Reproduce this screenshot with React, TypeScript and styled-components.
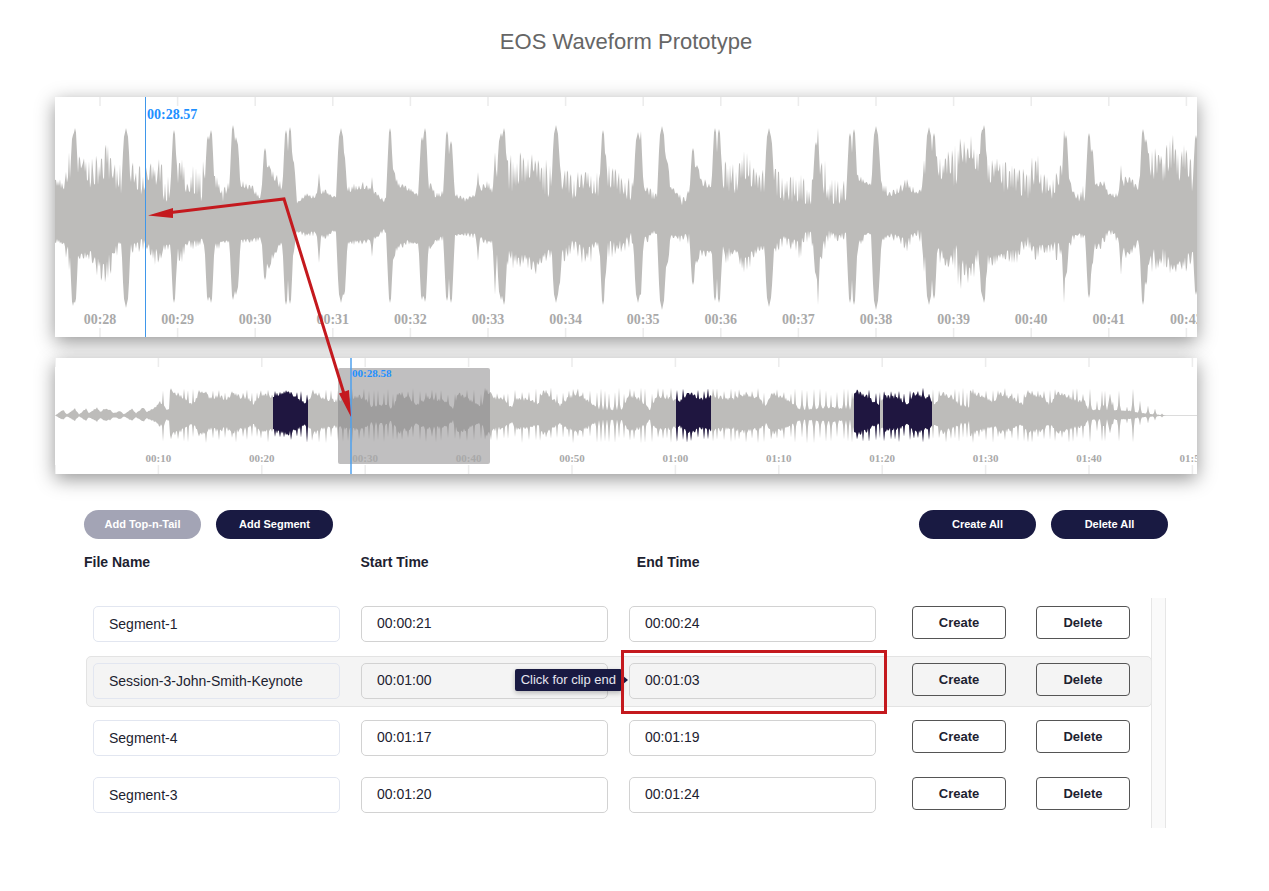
import React from "react";
import styled, { createGlobalStyle } from "styled-components";

const GlobalStyle = createGlobalStyle`
  *, *::before, *::after { box-sizing: border-box; }
  body {
    margin: 0;
    background: #fff;
    color: #1d2230;
    font-family: "Liberation Sans", Arial, sans-serif;
  }
`;

const NAVY = "#191a42";
const RED = "#c4191e";
const WAVE = "#bdbcba";
const BLUE = "#1e90ff";

const Page = styled.main`
  padding: 29px 72px 40px 55px;
`;

const Title = styled.h1`
  margin: 0 0 42px;
  font-size: 22px;
  line-height: 26px;
  font-weight: 400;
  text-align: center;
  color: #666;
`;

const Waveforms = styled.section`
  position: relative;
  display: flex;
  flex-direction: column;
  gap: 21px;
`;

const WavePanel = styled.div`
  background: #fff;
  box-shadow: 0 5px 18px rgba(0, 0, 0, 0.42);

  svg {
    display: block;
    width: 100%;
    height: auto;
  }
`;

const AxisLabel = styled.text<{ $size: number }>`
  font: bold ${(p) => p.$size}px "Liberation Serif", "Times New Roman", serif;
  fill: #a9a9a9;
  text-anchor: middle;
`;

const PlayheadLabel = styled.text<{ $size: number }>`
  font: bold ${(p) => p.$size}px "Liberation Serif", "Times New Roman", serif;
  fill: ${BLUE};
`;

const Annotation = styled.svg`
  position: absolute;
  inset: 0;
  width: 100%;
  height: 100%;
  pointer-events: none;
`;

const Editor = styled.section`
  margin: 36px 29px 0;
`;

const Toolbar = styled.div`
  display: flex;
  gap: 15px;
  margin-bottom: 13px;
`;

const Spacer = styled.div`
  flex: 1;
`;

const Pill = styled.button`
  width: 117px;
  height: 29px;
  padding: 0 0 1px;
  border: 0;
  border-radius: 15px;
  background: ${NAVY};
  color: #fff;
  font: bold 11px "Liberation Sans", Arial, sans-serif;

  &:disabled {
    background: #a3a4b5;
  }
`;

const Table = styled.table`
  display: block;
`;

const Head = styled.thead`
  display: block;
  margin-bottom: 26px;
`;

const HeadRow = styled.tr`
  display: grid;
  grid-template-columns: repeat(3, 51fr) 47fr;
`;

const HeadCell = styled.th`
  padding: 0;
  font-size: 14px;
  line-height: 20px;
  text-align: left;
`;

const Body = styled.tbody`
  position: relative;
  display: flex;
  flex-direction: column;
  gap: 6px;
  height: 230px;
  margin: 0 2px;
  padding: 1px 14px 0 0;

  &::after {
    content: "";
    position: absolute;
    top: 0;
    right: 0;
    bottom: 0;
    width: 15px;
    background: #fafafa;
    border: solid #e6e6e6;
    border-width: 0 1px;
  }
`;

const Row = styled.tr<{ $active: boolean }>`
  display: grid;
  grid-template-columns: repeat(3, minmax(0, 1fr)) 109px 103px;
  column-gap: 21px;
  height: 51px;
  padding: 6px 21px 6px 6px;
  border: 1px solid ${(p) => (p.$active ? "#e3e3e3" : "transparent")};
  border-radius: 5px;
  background: ${(p) => (p.$active ? "#f4f4f4" : "transparent")};
`;

const Cell = styled.td`
  position: relative;
  padding: 0;
`;

const ActionCell = styled.td`
  display: flex;
  justify-content: flex-end;
  align-items: flex-start;
  padding: 0;
`;

const Field = styled.input<{ $kind: "name" | "time" }>`
  display: block;
  width: 100%;
  height: 36px;
  padding: ${(p) => (p.$kind === "name" ? "0 15px" : "0 15px 2px")};
  border: 1px solid ${(p) => (p.$kind === "name" ? "#e2e6f0" : "#d2d2d2")};
  border-radius: 5px;
  background: transparent;
  color: #1d2230;
  font: 14px "Liberation Sans", Arial, sans-serif;
  outline: none;
`;

const RowButton = styled.button`
  width: 94px;
  height: 33px;
  padding: 0 0 1px;
  border: 1px solid #555;
  border-radius: 4px;
  background: transparent;
  color: #1d2230;
  font: bold 13px "Liberation Sans", Arial, sans-serif;
`;

const Tooltip = styled.div`
  position: absolute;
  top: 6px;
  right: calc(100% + 7px);
  padding: 0 6px;
  border-radius: 2px;
  background: ${NAVY};
  color: #e6e6f0;
  font-size: 13px;
  line-height: 22px;
  white-space: nowrap;
  box-shadow: 0 2px 5px rgba(0, 0, 0, 0.25);

  &::after {
    content: "";
    position: absolute;
    top: 6px;
    left: 100%;
    border: solid transparent;
    border-width: 5px 0 5px 6px;
    border-left-color: ${NAVY};
  }
`;

const Highlight = styled.div`
  position: absolute;
  inset: -13px -11px -14px -8px;
  border: 3px solid ${RED};
  pointer-events: none;
`;

/* x, body up, crest up, body down, crest down */
type Envelope = [number, number, number, number, number];
/* x, up, down, half width */
type Beat = [number, number, number, number];

const zoomEnvelope: Envelope[] = [
  [0, 28, 38, 22, 28], [10, 25, 35, 28, 36], [13, 28, 68, 30, 60], [27, 45, 58, 38, 45],
  [35, 22, 55, 35, 52], [40, 22, 58, 42, 60], [52, 40, 72, 42, 72], [60, 22, 55, 28, 48],
  [65, 18, 55, 25, 35], [80, 28, 53, 28, 42], [87, 17, 48, 23, 37], [94, 32, 50, 28, 42],
  [105, 28, 60, 35, 58], [110, 8, 40, 28, 38], [127, 35, 58, 32, 52], [133, 15, 36, 25, 32],
  [138, 18, 55, 25, 38], [148, 12, 55, 22, 32], [162, 28, 38, 28, 38], [168, 12, 30, 25, 28],
  [174, 25, 38, 25, 30], [185, 28, 36, 25, 30], [198, 22, 30, 22, 28], [205, 15, 20, 22, 28],
  [218, 35, 48, 38, 52], [228, 22, 28, 22, 28], [242, 10, 13, 15, 18], [252, 19, 23, 18, 23],
  [258, 16, 20, 15, 22], [270, 22, 26, 20, 26], [275, 18, 21, 17, 20], [283, 16, 18, 12, 15],
  [293, 22, 30, 25, 33], [308, 25, 33, 25, 30], [323, 18, 22, 20, 23], [329, 12, 15, 12, 20],
  [342, 27, 36, 30, 38], [352, 24, 29, 25, 30], [364, 18, 21, 28, 30], [377, 26, 34, 30, 36],
  [380, 17, 22, 25, 28], [388, 17, 28, 20, 26], [400, 19, 22, 20, 22], [410, 12, 17, 17, 22],
  [418, 17, 22, 17, 24], [432, 27, 35, 25, 30], [437, 22, 28, 25, 28], [455, 15, 60, 30, 55],
  [463, 25, 64, 42, 58], [470, 22, 56, 38, 46], [478, 40, 64, 45, 68], [485, 25, 56, 42, 52],
  [493, 15, 55, 32, 45], [507, 22, 48, 32, 52], [517, 15, 42, 25, 38], [532, 28, 48, 30, 55],
  [543, 12, 45, 25, 35], [555, 25, 50, 25, 44], [568, 18, 42, 25, 40], [578, 8, 38, 15, 30],
  [589, 25, 29, 22, 35], [598, 10, 25, 15, 20], [618, 25, 28, 20, 23], [628, 8, 18, 18, 30],
  [634, 20, 26, 18, 30], [648, 28, 38, 35, 43], [655, 26, 32, 35, 42], [668, 18, 58, 30, 55],
  [682, 22, 49, 35, 40], [690, 35, 72, 42, 68], [700, 20, 46, 32, 40], [710, 15, 44, 28, 35],
  [722, 15, 46, 25, 38], [730, 12, 39, 20, 30], [745, 12, 49, 25, 45], [753, 7, 32, 12, 25],
  [768, 22, 68, 25, 52], [773, 12, 36, 15, 28], [785, 8, 34, 18, 28], [792, 8, 34, 16, 28],
  [802, 33, 43, 28, 42], [812, 30, 33, 17, 19], [818, 29, 31, 19, 21], [828, 20, 36, 22, 32],
  [835, 18, 23, 18, 23], [852, 25, 37, 22, 37], [862, 20, 23, 13, 23], [867, 22, 32, 16, 30],
  [872, 12, 50, 20, 36], [881, 45, 68, 22, 54], [887, 25, 62, 35, 54], [893, 40, 70, 45, 54],
  [899, 18, 70, 25, 62], [905, 50, 76, 40, 75], [912, 50, 72, 48, 70], [917, 50, 86, 48, 65],
  [923, 35, 60, 30, 58], [935, 25, 58, 38, 62], [943, 42, 58, 40, 47], [950, 18, 56, 35, 45],
  [962, 22, 55, 32, 52], [972, 10, 46, 18, 35], [980, 30, 65, 32, 45], [988, 18, 48, 28, 42],
  [998, 15, 38, 25, 46], [1004, 25, 54, 28, 46], [1015, 28, 34, 22, 35], [1022, 14, 20, 17, 24],
  [1028, 12, 30, 17, 26], [1042, 28, 32, 30, 35], [1048, 28, 36, 20, 36], [1055, 17, 23, 12, 20],
  [1062, 17, 22, 20, 28], [1072, 32, 43, 36, 46], [1083, 24, 30, 24, 30], [1093, 42, 64, 48, 52],
  [1098, 30, 74, 32, 66], [1105, 46, 60, 42, 54], [1108, 32, 62, 30, 54], [1118, 45, 84, 48, 64],
  [1123, 32, 62, 46, 54], [1130, 38, 70, 42, 58], [1137, 22, 52, 32, 56], [1142, 30, 50, 30, 50],
];

const zoomBeats: Beat[] = [
  [18, 80, 91, 2], [20, 87, 88, 2], [71, 87, 93, 3], [119, 85, 88, 2], [153, 79, 86, 2],
  [156, 85, 88, 2], [178, 90, 85, 2], [181, 78, 80, 3], [210, 67, 65, 2], [214, 50, 54, 3],
  [231, 85, 90, 2], [235, 88, 89, 2], [237, 58, 40, 3], [264, 42, 48, 1], [286, 87, 88, 3],
  [289, 60, 80, 2], [317, 38, 42, 1], [335, 87, 88, 2], [338, 46, 45, 3], [367, 78, 85, 2],
  [370, 87, 87, 2], [392, 84, 86, 2], [396, 74, 88, 2], [423, 43, 46, 1], [440, 63, 80, 1],
  [446, 82, 85, 3], [449, 87, 90, 2], [501, 90, 88, 3], [503, 55, 75, 3], [548, 85, 90, 2],
  [550, 62, 60, 2], [583, 83, 88, 3], [586, 84, 80, 1], [607, 89, 95, 3], [610, 60, 55, 4],
  [638, 67, 70, 2], [642, 50, 48, 3], [660, 87, 86, 2], [664, 86, 88, 2], [665, 64, 60, 2],
  [714, 87, 92, 3], [716, 75, 74, 2], [761, 73, 60, 2], [763, 87, 90, 1], [795, 82, 88, 2],
  [799, 86, 90, 2], [821, 89, 95, 3], [823, 70, 75, 2], [869, 55, 57, 1], [874, 88, 90, 3],
  [879, 82, 84, 2], [927, 85, 80, 2], [929, 90, 88, 2], [1009, 85, 88, 1], [1011, 80, 60, 2],
  [1034, 82, 83, 2], [1037, 66, 50, 2], [1066, 50, 60, 1], [1088, 86, 90, 2], [1091, 76, 70, 2],
  [1141, 80, 80, 2],
];

const bodyLevels: [number, number][] = [
  [0, 0], [8, 5], [12, 1], [20, 6], [24, 1], [31, 6], [34, 2], [42, 7], [45, 3], [50, 6], [55, 5],
  [59, 2], [65, 4], [69, 1], [77, 6], [81, 2], [88, 7], [92, 3], [100, 7], [105, 12], [109, 8],
  [112, 5], [114, 6], [115, 24], [118, 22], [128, 16], [138, 9], [145, 23], [155, 16], [167, 17],
  [170, 13], [178, 21], [185, 16], [193, 15], [198, 10], [205, 19], [217, 17], [232, 22],
  [252, 10], [258, 22], [268, 15], [282, 13], [294, 16], [305, 17], [313, 12], [318, 6],
  [328, 10], [338, 6], [343, 20], [355, 15], [362, 9], [372, 16], [390, 13], [398, 6], [403, 20],
  [418, 12], [427, 8], [430, 24], [441, 15], [450, 15], [453, 8], [457, 8], [460, 15], [475, 14],
  [483, 10], [488, 22], [497, 15], [505, 9], [512, 15], [522, 20], [535, 12], [545, 5], [568, 5],
  [573, 18], [585, 14], [595, 5], [602, 18], [620, 14], [624, 12], [635, 20], [648, 14],
  [657, 18], [678, 14], [688, 19], [705, 15], [710, 8], [717, 20], [735, 13], [745, 5],
  [778, 7], [795, 5], [800, 22], [812, 17], [823, 9], [830, 17], [845, 15], [853, 10],
  [858, 20], [875, 15], [880, 10], [887, 20], [898, 15], [907, 8], [914, 7], [915, 22],
  [935, 14], [938, 11], [945, 20], [958, 15], [968, 10], [972, 20], [988, 17], [995, 9],
  [1002, 21], [1022, 13], [1030, 12], [1033, 5], [1055, 5], [1075, 4], [1088, 2], [1100, 1],
  [1112, 0], [1142, 0],
];

const tailBeats: Beat[] = [
  [108, 25, 26, 0], [1035, 27, 27, 0], [1042, 15, 16, 0], [1047, 25, 26, 0], [1050, 25, 26, 0],
  [1055, 22, 18, 1], [1058, 14, 9, 0], [1064, 25, 26, 0], [1072, 9, 8, 0], [1078, 27, 27, 0],
  [1085, 15, 10, 0], [1093, 10, 8, 0], [1100, 7, 5, 0], [1107, 2, 2, 0],
];

function seeded(seed: number) {
  let s = seed;
  return () => {
    s = (s * 1103515245 + 12345) % 2147483648;
    return s / 2147483648;
  };
}

function overviewBeats(): Beat[] {
  const rand = seeded(11);
  const beats: Beat[] = [...tailBeats];
  for (let x = 116; x < 1032; x += 4 + Math.floor(rand() * 4)) {
    beats.push([x, 21 + rand() * 7, 21 + rand() * 7, 0]);
  }
  return beats;
}

function mix(env: Envelope[], x: number, k: number) {
  let i = 1;
  while (i < env.length - 1 && env[i][0] < x) i += 1;
  const a = env[i - 1];
  const b = env[i];
  const t = Math.min(1, Math.max(0, (x - a[0]) / (b[0] - a[0])));
  return a[k] + (b[k] - a[k]) * t;
}

function beatGain(distance: number, halfWidth: number) {
  if (halfWidth === 0) return Math.max(0, 1 - distance * 0.6);
  if (distance < halfWidth) return 1 - distance * 0.05;
  return Math.max(0, 0.72 - (distance - halfWidth) * 0.26);
}

function wavePath(env: Envelope[], beats: Beat[], mid: number, seed: number) {
  const rand = seeded(seed);
  const top: string[] = [];
  const bottom: string[] = [];
  const last = env[env.length - 1][0];
  let crest = false;
  let nextFlip = 0;
  for (let x = 0; x <= last; x += 1) {
    let up = mix(env, x, 1);
    let down = mix(env, x, 3);
    if (x >= nextFlip) {
      crest = !crest;
      nextFlip = x + 1 + Math.floor(rand() * 2);
    }
    const reach = crest ? 0.6 + rand() * 0.45 : rand() * 0.35;
    up += (mix(env, x, 2) - up) * reach;
    down += (mix(env, x, 4) - down) * (crest ? 0.4 + rand() * 0.6 : rand() * 0.3);
    beats.forEach(([bx, bu, bd, w]) => {
      const gain = beatGain(Math.abs(x - bx), w);
      up = Math.max(up, bu * gain);
      down = Math.max(down, bd * gain);
    });
    top.push(`${x} ${(mid - up).toFixed(1)}`);
    bottom.unshift(`${x} ${(mid + down).toFixed(1)}`);
  }
  return `M${top.join("L")}L${bottom.join("L")}Z`;
}

const zoomPath = wavePath(zoomEnvelope, zoomBeats, 118, 5);
const overviewPath = wavePath(
  bodyLevels.map(([x, v]) => [x, v, v + Math.min(4, v / 4), v * 0.75, v * 0.75 + Math.min(5, v / 4)]),
  overviewBeats(),
  57.5,
  7,
);

const pad = (n: number) => String(n).padStart(2, "0");
const zoomTicks = Array.from({ length: 15 }, (_, i) => ({ x: 45 + i * 77.6, label: `00:${28 + i}` }));
const overviewTicks = Array.from({ length: 12 }, (_, i) => ({
  x: i * 103.4,
  label: i ? `${pad(Math.floor(i / 6))}:${pad((i % 6) * 10)}` : "",
}));
const clips = [
  { x: 218, width: 35 },
  { x: 621, width: 35 },
  { x: 799, width: 26 },
  { x: 828, width: 49 },
];

function ZoomView() {
  return (
    <WavePanel>
      <svg viewBox="0 0 1142 240" role="img" aria-label="Zoomed waveform">
        {zoomTicks.map((t) => (
          <path key={t.label} d={`M${t.x} 0v9M${t.x} 231v9`} stroke="#ececec" strokeWidth={1.5} />
        ))}
        <path d={zoomPath} fill={WAVE} />
        {zoomTicks.map((t) => (
          <AxisLabel key={t.label} $size={14} x={t.x} y={227}>{t.label}</AxisLabel>
        ))}
        <rect x={90} y={0} width={1} height={240} fill="#3f97ea" />
        <PlayheadLabel $size={14} x={92} y={22}>00:28.57</PlayheadLabel>
      </svg>
    </WavePanel>
  );
}

function Overview() {
  return (
    <WavePanel>
      <svg viewBox="0 0 1142 116" role="img" aria-label="Waveform overview">
        <defs>
          <clipPath id="clips">
            {clips.map((c) => (
              <rect key={c.x} x={c.x} y={0} width={c.width} height={116} />
            ))}
          </clipPath>
        </defs>
        {overviewTicks.map((t) => (
          <path key={t.x} d={`M${t.x} 0v9M${t.x} 107v9`} stroke="#ececec" strokeWidth={1.5} />
        ))}
        <path d="M1100 57.5H1142" stroke="#dcdcdc" />
        <path d={overviewPath} fill={WAVE} />
        <path d={overviewPath} fill="#1f1640" clipPath="url(#clips)" />
        <rect x={283} y={10} width={152} height={96} rx={2} fill="#827f81" fillOpacity={0.5} />
        {overviewTicks.map((t) => (
          <AxisLabel key={t.x} $size={11} x={t.x} y={104}>{t.label}</AxisLabel>
        ))}
        <path d="M296 0v116" stroke="#4ea0ee" strokeWidth={1.5} />
        <PlayheadLabel $size={11} x={297} y={19}>00:28.58</PlayheadLabel>
      </svg>
    </WavePanel>
  );
}

const segments = [
  { name: "Segment-1", start: "00:00:21", end: "00:00:24" },
  { name: "Session-3-John-Smith-Keynote", start: "00:01:00", end: "00:01:03", active: true },
  { name: "Segment-4", start: "00:01:17", end: "00:01:19" },
  { name: "Segment-3", start: "00:01:20", end: "00:01:24" },
];

export default function App() {
  return (
    <Page>
      <GlobalStyle />
      <Title>EOS Waveform Prototype</Title>
      <Waveforms>
        <ZoomView />
        <Overview />
        <Annotation viewBox="0 0 1142 377" aria-hidden="true">
          <path d="M116 115.500L229 102L290 300" fill="none" stroke={RED} strokeWidth={3} />
          <path d="M93 118.500L118 111V121ZM296 320L284 296.500L294 293Z" fill={RED} />
        </Annotation>
      </Waveforms>
      <Editor>
        <Toolbar>
          <Pill type="button" disabled>Add Top-n-Tail</Pill>
          <Pill type="button">Add Segment</Pill>
          <Spacer />
          <Pill type="button">Create All</Pill>
          <Pill type="button">Delete All</Pill>
        </Toolbar>
        <Table>
          <Head>
            <HeadRow>
              <HeadCell scope="col">File Name</HeadCell>
              <HeadCell scope="col">Start Time</HeadCell>
              <HeadCell scope="col">End Time</HeadCell>
            </HeadRow>
          </Head>
          <Body>
            {segments.map((s) => (
              <Row key={s.name} $active={!!s.active}>
                <Cell>
                  <Field $kind="name" aria-label="File Name" defaultValue={s.name} />
                </Cell>
                <Cell>
                  <Field $kind="time" aria-label="Start Time" defaultValue={s.start} />
                </Cell>
                <Cell>
                  <Field $kind="time" aria-label="End Time" defaultValue={s.end} />
                  {s.active && (
                    <>
                      <Tooltip role="tooltip">Click for clip end</Tooltip>
                      <Highlight />
                    </>
                  )}
                </Cell>
                <ActionCell>
                  <RowButton type="button">Create</RowButton>
                </ActionCell>
                <ActionCell>
                  <RowButton type="button">Delete</RowButton>
                </ActionCell>
              </Row>
            ))}
          </Body>
        </Table>
      </Editor>
    </Page>
  );
}
